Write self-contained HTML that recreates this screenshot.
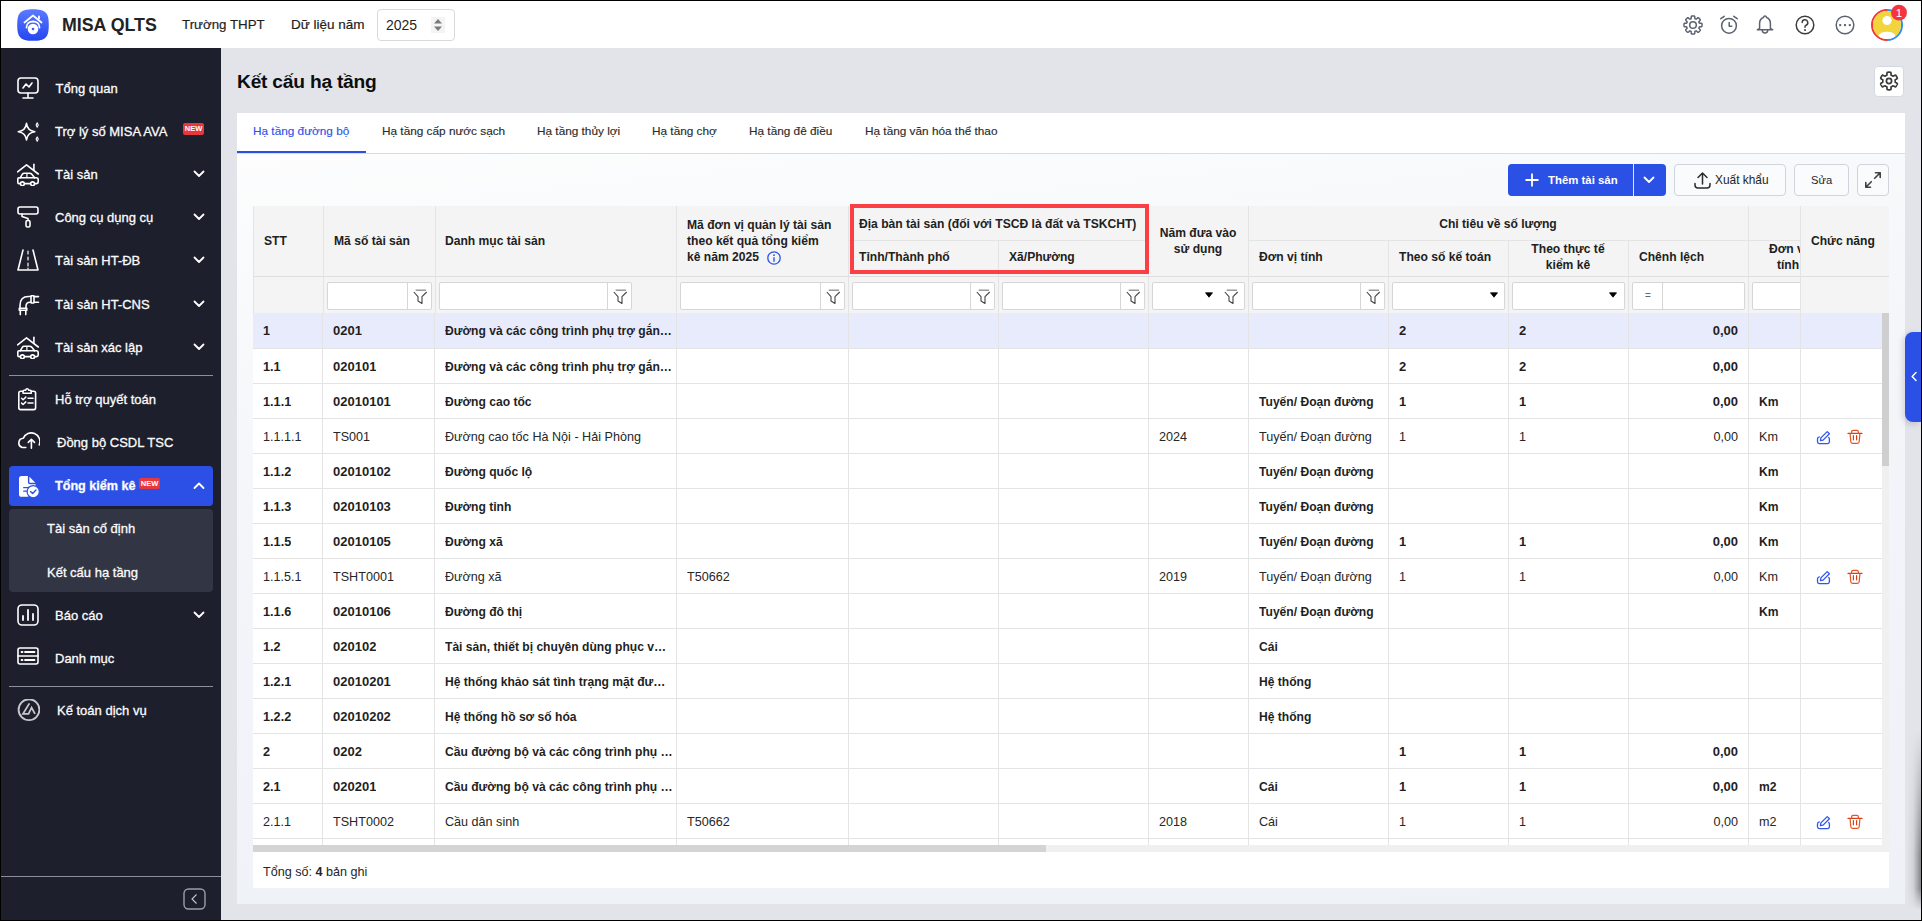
<!DOCTYPE html>
<html><head><meta charset="utf-8"><title>Kết cấu hạ tầng</title>
<style>
*{box-sizing:border-box;margin:0;padding:0}
html,body{width:1922px;height:921px;overflow:hidden;background:#000}
body{position:relative;font-family:"Liberation Sans", sans-serif;color:#212121}
.a{position:absolute}
.t{position:absolute;white-space:nowrap}
.side .t{color:#fbfbfc;font-size:13px;line-height:20px;-webkit-text-stroke:0.3px #fbfbfc}
.hd{position:absolute;font-weight:700;font-size:12.1px;color:#212121;white-space:nowrap;line-height:16px}
.c{position:absolute;white-space:nowrap;overflow:hidden;text-overflow:ellipsis;font-size:12.6px;line-height:16px;color:#262626}
.c.b{font-weight:700;font-size:12.1px;color:#1f1f1f}
.vl{position:absolute;width:1px;background:#e4e4e4}
.hl{position:absolute;height:1px;background:#e4e4e4}
.fi{position:absolute;top:282px;height:28px;background:#fff;border:1px solid #d6d6d6;border-radius:2px}
.fsep{position:absolute;top:0;bottom:0;width:1px;background:#d6d6d6}
</style></head><body>
<div class="a" style="left:1px;top:1px;width:1920px;height:919px;background:#e2e4ea"></div>

<div class="a" style="left:1px;top:1px;width:1920px;height:47px;background:#fff"></div>
<svg class="a" style="left:17px;top:9px" width="32" height="32" viewBox="0 0 32 32">
<defs><linearGradient id="lg" x1="0" y1="0" x2="0" y2="1"><stop offset="0" stop-color="#5a7bff"/><stop offset="1" stop-color="#2446f0"/></linearGradient></defs>
<path d="M16 0.2 C28.5 0.2 31.8 3.5 31.8 16 C31.8 28.5 28.5 31.8 16 31.8 C3.5 31.8 0.2 28.5 0.2 16 C0.2 3.5 3.5 0.2 16 0.2Z" fill="url(#lg)"/>
<path d="M7.5 13.5 L16 6.5 L24.5 13.5" fill="none" stroke="#fff" stroke-width="1.8" stroke-linecap="round" stroke-linejoin="round"/>
<path d="M22 9.5v-2" stroke="#fff" stroke-width="1.8" stroke-linecap="round"/>
<path d="M9.5 18.5 C9.5 14.5 12.5 12.5 16 12.5 C19.5 12.5 22.5 14.5 22.5 18.5" fill="none" stroke="#fff" stroke-width="1.8" stroke-linecap="round"/>
<circle cx="16" cy="20" r="5.3" fill="#fff"/><circle cx="16" cy="20" r="1.3" fill="#3a5cf5"/>
</svg>
<div class="t" style="left:62px;top:14px;font-size:17.8px;line-height:22px;font-weight:700;color:#222">MISA QLTS</div>
<div class="t" style="left:182px;top:15px;font-size:13.3px;line-height:20px;color:#1f1f1f;-webkit-text-stroke:0.2px #1f1f1f">Trường THPT</div>
<div class="t" style="left:291px;top:15px;font-size:13.5px;line-height:20px;color:#1f1f1f;-webkit-text-stroke:0.2px #1f1f1f">Dữ liệu năm</div>
<div class="a" style="left:377px;top:9px;width:78px;height:32px;border:1px solid #d9d9d9;border-radius:4px;background:#fff"></div>
<div class="t" style="left:386px;top:15px;font-size:14px;line-height:20px;color:#1f1f1f">2025</div>
<div class="a" style="left:431px;top:17px;width:14px;height:16px;background:#f4f4f4"></div>
<svg class="a" style="left:433px;top:18px" width="10" height="14" viewBox="0 0 10 14"><path d="M5 1 L9 5.5 H1Z M5 13 L9 8.5 H1Z" fill="#7a7a7a"/></svg>
<svg style="position:absolute;left:1683px;top:15px" width="20" height="20" viewBox="0 0 20 20" ><g fill="none" stroke="#5b6370" stroke-width="1.5" stroke-linecap="round" stroke-linejoin="round"><path d="M10.00 1.00 L10.31 1.01 L10.63 1.02 L10.94 1.05 L11.25 1.09 L11.56 1.17 L11.75 1.75 L11.82 2.71 L11.86 3.50 L12.04 3.72 L12.26 3.80 L12.47 3.88 L12.68 3.97 L12.89 4.07 L13.10 4.16 L13.54 3.87 L14.23 3.23 L14.91 2.72 L15.29 2.72 L15.54 2.91 L15.79 3.11 L16.02 3.31 L16.25 3.53 L16.47 3.75 L16.69 3.98 L16.89 4.21 L17.09 4.46 L17.28 4.71 L17.28 5.09 L16.77 5.77 L16.13 6.46 L15.84 6.90 L15.93 7.11 L16.03 7.32 L16.12 7.53 L16.20 7.74 L16.28 7.96 L16.50 8.14 L17.29 8.18 L18.25 8.25 L18.83 8.44 L18.91 8.75 L18.95 9.06 L18.98 9.37 L18.99 9.69 L19.00 10.00 L18.99 10.31 L18.98 10.63 L18.95 10.94 L18.91 11.25 L18.83 11.56 L18.25 11.75 L17.29 11.82 L16.50 11.86 L16.28 12.04 L16.20 12.26 L16.12 12.47 L16.03 12.68 L15.93 12.89 L15.84 13.10 L16.13 13.54 L16.77 14.23 L17.28 14.91 L17.28 15.29 L17.09 15.54 L16.89 15.79 L16.69 16.02 L16.47 16.25 L16.25 16.47 L16.02 16.69 L15.79 16.89 L15.54 17.09 L15.29 17.28 L14.91 17.28 L14.23 16.77 L13.54 16.13 L13.10 15.84 L12.89 15.93 L12.68 16.03 L12.47 16.12 L12.26 16.20 L12.04 16.28 L11.86 16.50 L11.82 17.29 L11.75 18.25 L11.56 18.83 L11.25 18.91 L10.94 18.95 L10.63 18.98 L10.31 18.99 L10.00 19.00 L9.69 18.99 L9.37 18.98 L9.06 18.95 L8.75 18.91 L8.44 18.83 L8.25 18.25 L8.18 17.29 L8.14 16.50 L7.96 16.28 L7.74 16.20 L7.53 16.12 L7.32 16.03 L7.11 15.93 L6.90 15.84 L6.46 16.13 L5.77 16.77 L5.09 17.28 L4.71 17.28 L4.46 17.09 L4.21 16.89 L3.98 16.69 L3.75 16.47 L3.53 16.25 L3.31 16.02 L3.11 15.79 L2.91 15.54 L2.72 15.29 L2.72 14.91 L3.23 14.23 L3.87 13.54 L4.16 13.10 L4.07 12.89 L3.97 12.68 L3.88 12.47 L3.80 12.26 L3.72 12.04 L3.50 11.86 L2.71 11.82 L1.75 11.75 L1.17 11.56 L1.09 11.25 L1.05 10.94 L1.02 10.63 L1.01 10.31 L1.00 10.00 L1.01 9.69 L1.02 9.37 L1.05 9.06 L1.09 8.75 L1.17 8.44 L1.75 8.25 L2.71 8.18 L3.50 8.14 L3.72 7.96 L3.80 7.74 L3.88 7.53 L3.97 7.32 L4.07 7.11 L4.16 6.90 L3.87 6.46 L3.23 5.77 L2.72 5.09 L2.72 4.71 L2.91 4.46 L3.11 4.21 L3.31 3.98 L3.53 3.75 L3.75 3.53 L3.98 3.31 L4.21 3.11 L4.46 2.91 L4.71 2.72 L5.09 2.72 L5.77 3.23 L6.46 3.87 L6.90 4.16 L7.11 4.07 L7.32 3.97 L7.53 3.88 L7.74 3.80 L7.96 3.72 L8.14 3.50 L8.18 2.71 L8.25 1.75 L8.44 1.17 L8.75 1.09 L9.06 1.05 L9.37 1.02 L9.69 1.01Z"/><circle cx="10" cy="10" r="3.3"/></g></svg>
<svg style="position:absolute;left:1719px;top:15px" width="20" height="20" viewBox="0 0 20 20" ><g fill="none" stroke="#5b6370" stroke-width="1.5" stroke-linecap="round" stroke-linejoin="round"><circle cx="10" cy="10.8" r="7.4"/><path d="M10.2 7.5v3.7h2.5"/><path d="M1.8 3.7l3.4-2.4M18.2 3.7l-3.4-2.4"/></g></svg>
<svg style="position:absolute;left:1755px;top:15px" width="20" height="20" viewBox="0 0 20 20" ><g fill="none" stroke="#5b6370" stroke-width="1.5" stroke-linecap="round" stroke-linejoin="round"><path d="M10 1.1c-.9 0-1.4.7-1.6 1.4C6 3.4 4.6 5.6 4.6 8.4v5l-2.3 1.4h15.4l-2.3-1.4v-5c0-2.8-1.4-5-3.8-5.9-.2-.7-.7-1.4-1.6-1.4z"/><path d="M7.3 15.2a2.7 2.7 0 0 0 5.4 0"/></g></svg>
<svg style="position:absolute;left:1795px;top:15px" width="20" height="20" viewBox="0 0 20 20" ><g fill="none" stroke="#3d3d3d" stroke-width="1.5" stroke-linecap="round"><circle cx="10" cy="10" r="8.8"/><path d="M7.2 7.6a2.8 2.8 0 1 1 3.9 2.6c-.7.3-1.1.9-1.1 1.6v.5"/></g><rect x="9.2" y="14.2" width="1.7" height="1.7" fill="#3d3d3d"/></svg>
<svg style="position:absolute;left:1835px;top:15px" width="20" height="20" viewBox="0 0 20 20" ><g fill="none" stroke="#5b6370" stroke-width="1.5"><circle cx="10" cy="10" r="8.8"/></g><g fill="#5b6370"><rect x="4.2" y="9.1" width="2" height="2"/><rect x="9" y="9.1" width="2" height="2"/><rect x="13.8" y="9.1" width="2" height="2"/></g></svg>
<svg class="a" style="left:1870px;top:4px" width="40" height="38" viewBox="0 0 40 38">
<defs><clipPath id="av"><circle cx="17" cy="21" r="14"/></clipPath></defs>
<path d="M17 36 A15 15 0 0 1 17 6" fill="none" stroke="#f2353e" stroke-width="2"/>
<path d="M17 6 A15 15 0 0 1 17 36" fill="none" stroke="#2b8ef6" stroke-width="2"/>
<circle cx="17" cy="21" r="14" fill="#f2d53c"/>
<g clip-path="url(#av)" fill="#fff"><circle cx="17" cy="16.5" r="4.6"/><ellipse cx="17" cy="32.5" rx="8.6" ry="4.8"/></g>
<circle cx="29" cy="8.7" r="7.9" fill="#f2353e"/>
<text x="29" y="12.9" font-family="Liberation Sans" font-size="11.5" fill="#fff" text-anchor="middle">1</text>
</svg>
<div class="side">
<div class="a" style="left:1px;top:48px;width:220px;height:872px;background:#1d1f2c"></div>
<svg style="position:absolute;left:17px;top:77px" width="23" height="23" viewBox="0 0 23 23" ><g fill="none" stroke="#fff" stroke-width="1.6" stroke-linecap="round" stroke-linejoin="round"><rect x="1" y="1" width="20" height="15" rx="3"/><path d="M11 16v4M6 21h10"/><path d="M6 11l3-4 3 3 3-4"/></g></svg>
<div class="t" style="left:55.5px;top:79px">Tổng quan</div>
<svg style="position:absolute;left:17px;top:120px" width="23" height="23" viewBox="0 0 23 23" ><g fill="none" stroke="#fff" stroke-width="1.6" stroke-linecap="round" stroke-linejoin="round"><path d="M9.5 3.4 Q10.4 10.8 17.8 11.7 Q10.4 12.6 9.5 20 Q8.6 12.6 1.2 11.7 Q8.6 10.8 9.5 3.4Z"/><path d="M20.2 2.8 L21.3 5 L20.2 7.2 L19.1 5Z" stroke-width="1.1"/><path d="M20.2 16.9 L21.3 19.1 L20.2 21.3 L19.1 19.1Z" stroke-width="1.1"/></g></svg>
<div class="t" style="left:55px;top:122px">Trợ lý số MISA AVA</div>
<svg style="position:absolute;left:17px;top:163px" width="23" height="23" viewBox="0 0 23 23" ><g fill="none" stroke="#fff" stroke-width="1.6" stroke-linecap="round" stroke-linejoin="round"><path d="M0.6 8.8 L9.5 1.8 L21.3 11"/><path d="M16.9 1.3 V7"/><path d="M3.2 14.8 L5.4 11.2 Q6 10.3 7.1 10.3 H12.8 Q13.9 10.3 14.6 11.1 L17.6 14.8"/><path d="M9.9 10.5 V14.5" stroke-width="1.2"/><path d="M2 14.8 H19.3 Q21.2 14.8 21.2 16.7 V19 Q21.2 20.6 19.6 20.6 H2 Q0.8 20.6 0.8 19.4 V16 Q0.8 14.8 2 14.8Z"/><circle cx="5.4" cy="20.8" r="1.9" fill="#1d1f2c"/><circle cx="15.6" cy="20.8" r="1.9" fill="#1d1f2c"/></g></svg>
<div class="t" style="left:55px;top:165px">Tài sản</div>
<svg style="position:absolute;left:193px;top:170px" width="12" height="8" viewBox="0 0 12 8" ><path d="M1.5 1.5 L6 6 L10.5 1.5" fill="none" stroke="#fff" stroke-width="1.8" stroke-linecap="round" stroke-linejoin="round"/></svg>
<svg style="position:absolute;left:17px;top:206px" width="23" height="23" viewBox="0 0 23 23" ><g fill="none" stroke="#fff" stroke-width="1.6" stroke-linecap="round" stroke-linejoin="round"><rect x="1" y="1" width="20" height="7" rx="2"/><path d="M5 8v2.5l6 2v2"/><rect x="9" y="14.5" width="4" height="6.5" rx="1.5"/></g></svg>
<div class="t" style="left:55px;top:208px">Công cụ dụng cụ</div>
<svg style="position:absolute;left:193px;top:213px" width="12" height="8" viewBox="0 0 12 8" ><path d="M1.5 1.5 L6 6 L10.5 1.5" fill="none" stroke="#fff" stroke-width="1.8" stroke-linecap="round" stroke-linejoin="round"/></svg>
<svg style="position:absolute;left:17px;top:249px" width="23" height="23" viewBox="0 0 23 23" ><g fill="none" stroke="#fff" stroke-width="1.6" stroke-linecap="round" stroke-linejoin="round"><path d="M6 1 L1 21 H21 L16 1"/><path d="M11 2v3M11 8v3M11 14v3M11 19v1" stroke-width="1.2"/></g></svg>
<div class="t" style="left:55px;top:251px">Tài sản HT-ĐB</div>
<svg style="position:absolute;left:193px;top:256px" width="12" height="8" viewBox="0 0 12 8" ><path d="M1.5 1.5 L6 6 L10.5 1.5" fill="none" stroke="#fff" stroke-width="1.8" stroke-linecap="round" stroke-linejoin="round"/></svg>
<svg style="position:absolute;left:17px;top:293px" width="23" height="23" viewBox="0 0 23 23" ><g fill="none" stroke="#fff" stroke-width="1.6" stroke-linecap="round" stroke-linejoin="round"><path d="M3 15.2 V12.5 Q3 3.5 11.5 3.5 H14"/><path d="M9 15.2 V13.5 Q9 9.3 13 9.3 H14"/><rect x="14" y="2.8" width="3" height="7.2" rx="0.5"/><path d="M21.5 3.6 H17 M17 9.3 H21.5"/><path d="M2.3 15.2 H9.8 V17.2 H2.3Z"/><path d="M3.3 17.2 V21.6 M8.8 17.2 V21.6"/></g></svg>
<div class="t" style="left:55px;top:295px">Tài sản HT-CNS</div>
<svg style="position:absolute;left:193px;top:300px" width="12" height="8" viewBox="0 0 12 8" ><path d="M1.5 1.5 L6 6 L10.5 1.5" fill="none" stroke="#fff" stroke-width="1.8" stroke-linecap="round" stroke-linejoin="round"/></svg>
<svg style="position:absolute;left:17px;top:336px" width="23" height="23" viewBox="0 0 23 23" ><g fill="none" stroke="#fff" stroke-width="1.6" stroke-linecap="round" stroke-linejoin="round"><path d="M0.6 8.8 L9.5 1.8 L21.3 11"/><path d="M16.9 1.3 V7"/><path d="M3.2 14.8 L5.4 11.2 Q6 10.3 7.1 10.3 H12.8 Q13.9 10.3 14.6 11.1 L17.6 14.8"/><path d="M9.9 10.5 V14.5" stroke-width="1.2"/><path d="M2 14.8 H19.3 Q21.2 14.8 21.2 16.7 V19 Q21.2 20.6 19.6 20.6 H2 Q0.8 20.6 0.8 19.4 V16 Q0.8 14.8 2 14.8Z"/><circle cx="5.4" cy="20.8" r="1.9" fill="#1d1f2c"/><circle cx="15.6" cy="20.8" r="1.9" fill="#1d1f2c"/></g></svg>
<div class="t" style="left:55px;top:338px">Tài sản xác lập</div>
<svg style="position:absolute;left:193px;top:343px" width="12" height="8" viewBox="0 0 12 8" ><path d="M1.5 1.5 L6 6 L10.5 1.5" fill="none" stroke="#fff" stroke-width="1.8" stroke-linecap="round" stroke-linejoin="round"/></svg>
<svg style="position:absolute;left:17px;top:388px" width="23" height="23" viewBox="0 0 23 23" ><g fill="none" stroke="#fff" stroke-width="1.6" stroke-linecap="round" stroke-linejoin="round"><path d="M6 3.3 H3.6 Q1.8 3.3 1.8 5.1 V19.8 Q1.8 21.6 3.6 21.6 H16.8 Q18.6 21.6 18.6 19.8 V5.1 Q18.6 3.3 16.8 3.3 H14.2"/><path d="M6 5.2 V3.4 Q6 2.3 7.1 2.3 H8.7 A1.5 1.5 0 0 1 11.7 2.3 H13.2 Q14.3 2.3 14.3 3.4 V5.2 Z" stroke-width="1.5"/><path d="M4.6 10.3 L6.1 11.7 L8.8 9.1 M11 10.3 H16 M4.6 15.1 L6.1 16.5 L8.8 13.9 M11 15.1 H16" stroke-width="1.5"/></g></svg>
<div class="t" style="left:55px;top:390px">Hỗ trợ quyết toán</div>
<svg style="position:absolute;left:17px;top:431px" width="23" height="23" viewBox="0 0 23 23" ><g fill="none" stroke="#fff" stroke-width="1.6" stroke-linecap="round" stroke-linejoin="round" transform="translate(0,-1.8)"><path d="M8.8 18.3 H5.2 A4.7 4.7 0 0 1 6.3 9.1 A8.6 8.6 0 1 1 22.3 15.6"/><path d="M14.4 19 V10.2 M11.3 13.2 L14.4 10.1 L17.5 13.2"/></g></svg>
<div class="t" style="left:57px;top:433px">Đồng bộ CSDL TSC</div>
<svg style="position:absolute;left:17px;top:604px" width="23" height="23" viewBox="0 0 23 23" ><g fill="none" stroke="#fff" stroke-width="1.6" stroke-linecap="round" stroke-linejoin="round"><rect x="1" y="1" width="20" height="20" rx="4"/><path d="M6 16v-4M11 16V6M16 16v-6" stroke-width="1.8"/></g></svg>
<div class="t" style="left:55px;top:606px">Báo cáo</div>
<svg style="position:absolute;left:193px;top:611px" width="12" height="8" viewBox="0 0 12 8" ><path d="M1.5 1.5 L6 6 L10.5 1.5" fill="none" stroke="#fff" stroke-width="1.8" stroke-linecap="round" stroke-linejoin="round"/></svg>
<svg style="position:absolute;left:17px;top:647px" width="23" height="23" viewBox="0 0 23 23" ><g fill="none" stroke="#fff" stroke-width="1.6" stroke-linecap="round" stroke-linejoin="round"><rect x="1" y="1" width="20" height="16" rx="2"/><path d="M1 9h20"/><path d="M4.5 5h1M8 5h9.5M4.5 13h1M8 13h9.5" stroke-width="1.8"/></g></svg>
<div class="t" style="left:55px;top:649px">Danh mục</div>
<svg style="position:absolute;left:17px;top:699px" width="23" height="23" viewBox="0 0 23 23" ><g fill="none" stroke="#c6c7cd" stroke-width="1.9"><circle cx="12" cy="10.7" r="10.4"/><path d="M12.4 4.4 L6 14.8 H11.5 L14.6 8.6 L18 14.9" stroke-width="1.8" stroke-linejoin="miter"/></g></svg>
<div class="t" style="left:57px;top:701px">Kế toán dịch vụ</div>
<div class="a" style="left:183px;top:123px;width:21px;height:12px;background:#e8383d;border-radius:2px;color:#fff;font-size:7.5px;font-weight:700;line-height:12px;text-align:center">NEW</div>
<div class="a" style="left:9px;top:375px;width:204px;height:1px;background:#8c8e99"></div>
<div class="a" style="left:9px;top:686px;width:204px;height:1px;background:#8c8e99"></div>
<div class="a" style="left:1px;top:876px;width:220px;height:1px;background:#8c8e99"></div>
<div class="a" style="left:9px;top:466px;width:204px;height:40px;background:#2c50e6;border-radius:4px"></div>
<svg style="position:absolute;left:17px;top:475px" width="23" height="23" viewBox="0 0 23 23" ><g fill="#fff"><path d="M4.6 0.9 H10.9 V7.2 Q10.9 9.3 13 9.3 H18.6 V11.5 H11.5 V21.8 H4.6 Q2 21.8 2 19.2 V3.5 Q2 0.9 4.6 0.9Z"/><path d="M12.4 1.8 L18.3 7.8 H12.4Z"/></g><path d="M6.2 12.7 H12 M6.2 16.1 H11" stroke="#2c50e6" stroke-width="1.3"/><circle cx="16.2" cy="16.7" r="6.1" fill="#fff" stroke="#2c50e6" stroke-width="1.2"/><path d="M13.5 16.6 L15.6 18.5 L19 15" stroke="#2c50e6" stroke-width="1.4" fill="none" stroke-linecap="round" stroke-linejoin="round"/></svg>
<div class="t" style="left:55px;top:476px;font-weight:700;font-size:12.6px">Tổng kiểm kê</div>
<div class="a" style="left:139px;top:478px;width:21px;height:11px;background:#e8383d;border-radius:2px;color:#fff;font-size:7.5px;font-weight:700;line-height:11px;text-align:center">NEW</div>
<svg style="position:absolute;left:193px;top:482px" width="12" height="8" viewBox="0 0 12 8" ><path d="M1.5 6 L6 1.5 L10.5 6" fill="none" stroke="#fff" stroke-width="1.8" stroke-linecap="round" stroke-linejoin="round"/></svg>
<div class="a" style="left:9px;top:509px;width:204px;height:83px;background:#323543;border-radius:4px"></div>
<div class="t" style="left:47px;top:519px">Tài sản cố định</div>
<div class="t" style="left:47px;top:563px">Kết cấu hạ tầng</div>
<svg style="position:absolute;left:183px;top:888px" width="23" height="22" viewBox="0 0 23 22" ><rect x="1" y="1" width="21" height="20" rx="4.5" fill="none" stroke="#9c9ea6" stroke-width="1.4"/><path d="M13.5 6.5 L9 11 L13.5 15.5" fill="none" stroke="#c9cad0" stroke-width="1.1"/></svg>
</div>
<div class="t" style="left:237px;top:70px;font-size:19.2px;line-height:24px;letter-spacing:-0.22px;font-weight:700;color:#0d0d0d">Kết cấu hạ tầng</div>
<div class="a" style="left:1874px;top:66px;width:30px;height:31px;background:#fff;border:1px solid #d5dae2;border-radius:4px"></div>
<svg style="position:absolute;left:1879px;top:71px" width="20" height="20" viewBox="0 0 20 20" ><g fill="none" stroke="#3b3b3b" stroke-width="1.7" stroke-linejoin="round"><path d="M10.00 1.20 L10.31 1.21 L10.61 1.22 L10.92 1.25 L11.22 1.29 L11.53 1.33 L11.82 1.42 L12.01 1.95 L12.05 2.83 L12.05 3.69 L12.12 4.16 L12.32 4.25 L12.52 4.34 L12.72 4.43 L12.91 4.53 L13.10 4.63 L13.29 4.74 L13.47 4.86 L13.64 4.98 L13.82 5.11 L13.99 5.24 L14.44 5.07 L15.18 4.64 L15.97 4.23 L16.52 4.13 L16.74 4.34 L16.93 4.58 L17.12 4.83 L17.30 5.08 L17.46 5.34 L17.62 5.60 L17.77 5.87 L17.91 6.14 L18.04 6.42 L18.16 6.70 L18.27 6.99 L18.34 7.29 L17.98 7.71 L17.23 8.20 L16.49 8.62 L16.12 8.92 L16.14 9.14 L16.17 9.35 L16.18 9.57 L16.20 9.78 L16.20 10.00 L16.20 10.22 L16.18 10.43 L16.17 10.65 L16.14 10.86 L16.12 11.08 L16.49 11.38 L17.23 11.80 L17.98 12.29 L18.34 12.71 L18.27 13.01 L18.16 13.30 L18.04 13.58 L17.91 13.86 L17.77 14.13 L17.62 14.40 L17.46 14.66 L17.30 14.92 L17.12 15.17 L16.93 15.42 L16.74 15.66 L16.52 15.87 L15.97 15.77 L15.18 15.36 L14.44 14.93 L13.99 14.76 L13.82 14.89 L13.64 15.02 L13.47 15.14 L13.29 15.26 L13.10 15.37 L12.91 15.47 L12.72 15.57 L12.52 15.66 L12.32 15.75 L12.12 15.84 L12.05 16.31 L12.05 17.17 L12.01 18.05 L11.82 18.58 L11.53 18.67 L11.22 18.71 L10.92 18.75 L10.61 18.78 L10.31 18.79 L10.00 18.80 L9.69 18.79 L9.39 18.78 L9.08 18.75 L8.78 18.71 L8.47 18.67 L8.18 18.58 L7.99 18.05 L7.95 17.17 L7.95 16.31 L7.88 15.84 L7.68 15.75 L7.48 15.66 L7.28 15.57 L7.09 15.47 L6.90 15.37 L6.71 15.26 L6.53 15.14 L6.36 15.02 L6.18 14.89 L6.01 14.76 L5.56 14.93 L4.82 15.36 L4.03 15.77 L3.48 15.87 L3.26 15.66 L3.07 15.42 L2.88 15.17 L2.70 14.92 L2.54 14.66 L2.38 14.40 L2.23 14.13 L2.09 13.86 L1.96 13.58 L1.84 13.30 L1.73 13.01 L1.66 12.71 L2.02 12.29 L2.77 11.80 L3.51 11.38 L3.88 11.08 L3.86 10.86 L3.83 10.65 L3.82 10.43 L3.80 10.22 L3.80 10.00 L3.80 9.78 L3.82 9.57 L3.83 9.35 L3.86 9.14 L3.88 8.92 L3.51 8.62 L2.77 8.20 L2.02 7.71 L1.66 7.29 L1.73 6.99 L1.84 6.70 L1.96 6.42 L2.09 6.14 L2.23 5.87 L2.38 5.60 L2.54 5.34 L2.70 5.08 L2.88 4.83 L3.07 4.58 L3.26 4.34 L3.48 4.13 L4.03 4.23 L4.82 4.64 L5.56 5.07 L6.01 5.24 L6.18 5.11 L6.36 4.98 L6.53 4.86 L6.71 4.74 L6.90 4.63 L7.09 4.53 L7.28 4.43 L7.48 4.34 L7.68 4.25 L7.88 4.16 L7.95 3.69 L7.95 2.83 L7.99 1.95 L8.18 1.42 L8.47 1.33 L8.78 1.29 L9.08 1.25 L9.39 1.22 L9.69 1.21Z"/><circle cx="10" cy="10" r="2.6"/></g></svg>
<div class="a" style="left:237px;top:113px;width:1668px;height:791px;background:linear-gradient(174deg,#fefefe 0%,#f7f9fb 22%,#f1f4f8 60%,#eef2f7 100%)"></div>
<div class="a" style="left:237px;top:113px;width:1668px;height:40px;background:#fff"></div>
<div class="a" style="left:237px;top:153px;width:1668px;height:1px;background:#d9dce3"></div>
<div class="t" style="left:253px;top:123px;font-size:11.8px;line-height:16px;color:#2d52e8;-webkit-text-stroke:0.15px #2d52e8">Hạ tầng đường bộ</div>
<div class="t" style="left:382px;top:123px;font-size:11.8px;line-height:16px;color:#2b2b2b;-webkit-text-stroke:0.15px #2b2b2b">Hạ tầng cấp nước sạch</div>
<div class="t" style="left:537px;top:123px;font-size:11.8px;line-height:16px;color:#2b2b2b;-webkit-text-stroke:0.15px #2b2b2b">Hạ tầng thủy lợi</div>
<div class="t" style="left:652px;top:123px;font-size:11.8px;line-height:16px;color:#2b2b2b;-webkit-text-stroke:0.15px #2b2b2b">Hạ tầng chợ</div>
<div class="t" style="left:749px;top:123px;font-size:11.8px;line-height:16px;color:#2b2b2b;-webkit-text-stroke:0.15px #2b2b2b">Hạ tầng đê điều</div>
<div class="t" style="left:865px;top:123px;font-size:11.8px;line-height:16px;color:#2b2b2b;-webkit-text-stroke:0.15px #2b2b2b">Hạ tầng văn hóa thể thao</div>
<div class="a" style="left:237px;top:151px;width:129px;height:2px;background:#2a4fe6"></div>
<div class="a" style="left:1508px;top:164px;width:158px;height:32px;background:#2b50e6;border-radius:4px"></div>
<div class="a" style="left:1633px;top:164px;width:1px;height:32px;background:#dfe5ff"></div>
<svg style="position:absolute;left:1525px;top:173px" width="14" height="14" viewBox="0 0 14 14" ><path d="M7 0.5v13M0.5 7h13" stroke="#fff" stroke-width="1.8"/></svg>
<div class="t" style="left:1548px;top:172px;font-size:11.4px;line-height:16px;font-weight:700;color:#fff">Thêm tài sản</div>
<svg style="position:absolute;left:1643px;top:176px" width="12" height="8" viewBox="0 0 12 8" ><path d="M1.5 1.5 L6 6 L10.5 1.5" fill="none" stroke="#fff" stroke-width="1.8" stroke-linecap="round" stroke-linejoin="round"/></svg>
<div class="a" style="left:1674px;top:164px;width:112px;height:32px;background:rgba(255,255,255,0.35);border:1px solid #d0d5dd;border-radius:4px"></div>
<div class="a" style="left:1794px;top:164px;width:55px;height:32px;background:rgba(255,255,255,0.35);border:1px solid #d0d5dd;border-radius:4px"></div>
<div class="a" style="left:1857px;top:164px;width:32px;height:32px;background:rgba(255,255,255,0.35);border:1px solid #d0d5dd;border-radius:4px"></div>
<svg style="position:absolute;left:1694px;top:171px" width="17" height="18" viewBox="0 0 17 18" ><g fill="none" stroke="#2b2b2b" stroke-width="1.5" stroke-linecap="round" stroke-linejoin="round"><path d="M8.5 13V2M4 6.5l4.5-4.5 4.5 4.5"/><path d="M1 12.5v1.5a3 3 0 0 0 3 3h9a3 3 0 0 0 3-3v-1.5"/></g></svg>
<div class="t" style="left:1715px;top:172px;font-size:11.9px;line-height:16px;color:#1f1f1f">Xuất khẩu</div>
<div class="t" style="left:1811px;top:172px;font-size:11.2px;line-height:16px;color:#1f1f1f">Sửa</div>
<svg style="position:absolute;left:1864px;top:171px" width="18" height="18" viewBox="0 0 18 18" ><g fill="none" stroke="#404040" stroke-width="1.6" stroke-linecap="round" stroke-linejoin="round"><path d="M11.5 1.8h4.7v4.7M16.2 1.8l-5.5 5.5M6.5 16.2h-4.7v-4.7M1.8 16.2l5.5-5.5"/></g></svg>
<div class="a" style="left:253px;top:206px;width:1636px;height:107px;background:#f4f4f4"></div>
<div class="a" style="left:253px;top:313px;width:1629px;height:532px;background:#fff"></div>
<div class="hl" style="left:253px;top:276px;width:1636px;background:#dedede"></div>
<div class="hl" style="left:848px;top:240px;width:300px"></div>
<div class="hl" style="left:1248px;top:240px;width:552px"></div>
<div class="vl" style="left:253px;top:206px;height:107px"></div>
<div class="vl" style="left:323px;top:206px;height:107px"></div>
<div class="vl" style="left:435px;top:206px;height:107px"></div>
<div class="vl" style="left:676px;top:206px;height:107px"></div>
<div class="vl" style="left:848px;top:206px;height:107px"></div>
<div class="vl" style="left:1148px;top:206px;height:107px"></div>
<div class="vl" style="left:1248px;top:206px;height:107px"></div>
<div class="vl" style="left:1748px;top:206px;height:107px"></div>
<div class="vl" style="left:1800px;top:206px;height:107px"></div>
<div class="vl" style="left:998px;top:240px;height:73px"></div>
<div class="vl" style="left:1388px;top:240px;height:73px"></div>
<div class="vl" style="left:1508px;top:240px;height:73px"></div>
<div class="vl" style="left:1628px;top:240px;height:73px"></div>
<div class="hd" style="left:264px;top:233px;">STT</div>
<div class="hd" style="left:334px;top:233px;">Mã số tài sản</div>
<div class="hd" style="left:445px;top:233px;">Danh mục tài sản</div>
<div class="hd" style="left:687px;top:217px;">Mã đơn vị quản lý tài sản</div>
<div class="hd" style="left:687px;top:233px;">theo kết quả tổng kiểm</div>
<div class="hd" style="left:687px;top:249px;">kê năm 2025</div>
<svg style="position:absolute;left:767px;top:251px" width="14" height="14" viewBox="0 0 14 14" ><circle cx="7" cy="7" r="6.2" fill="none" stroke="#2d52e8" stroke-width="1.3"/><circle cx="7" cy="4.2" r="0.9" fill="#2d52e8"/><path d="M7 6.2v4.5" stroke="#2d52e8" stroke-width="1.4"/></svg>
<div class="hd" style="left:859px;top:216px;">Địa bàn tài sản (đối với TSCĐ là đất và TSKCHT)</div>
<div class="hd" style="left:859px;top:249px;">Tỉnh/Thành phố</div>
<div class="hd" style="left:1009px;top:249px;">Xã/Phường</div>
<div class="hd" style="left:1148px;top:225px;width:100px;text-align:center">Năm đưa vào<br>sử dụng</div>
<div class="hd" style="left:1248px;top:216px;width:500px;text-align:center">Chỉ tiêu về số lượng</div>
<div class="hd" style="left:1259px;top:249px;">Đơn vị tính</div>
<div class="hd" style="left:1399px;top:249px;">Theo số kế toán</div>
<div class="hd" style="left:1508px;top:241px;width:120px;text-align:center">Theo thực tế<br>kiểm kê</div>
<div class="hd" style="left:1639px;top:249px;">Chênh lệch</div>
<div class="a" style="left:1749px;top:241px;width:51px;height:35px;overflow:hidden"><div class="hd" style="left:-1px;top:0px;width:80px;text-align:center">Đơn vị<br>tính</div></div>
<div class="hd" style="left:1811px;top:233px;">Chức năng</div>
<div class="a" style="left:850px;top:204px;width:299px;height:70px;border:4px solid #fb3f44"></div>
<div class="fi" style="left:327px;width:105px">
<div class="fsep" style="left:79px"></div>
</div>
<svg style="position:absolute;left:413px;top:289px" width="15" height="16" viewBox="0 0 15 16" ><path d="M2.7 1.2h10.3" stroke="#8a8a8a" stroke-width="1.3"/><path d="M0.8 3 L5 7.6 V12 L9 14.5 V7.6 L13.7 3" fill="none" stroke="#444" stroke-width="1.1" stroke-linejoin="round"/></svg>
<div class="fi" style="left:439px;width:193px">
<div class="fsep" style="left:167px"></div>
</div>
<svg style="position:absolute;left:613px;top:289px" width="15" height="16" viewBox="0 0 15 16" ><path d="M2.7 1.2h10.3" stroke="#8a8a8a" stroke-width="1.3"/><path d="M0.8 3 L5 7.6 V12 L9 14.5 V7.6 L13.7 3" fill="none" stroke="#444" stroke-width="1.1" stroke-linejoin="round"/></svg>
<div class="fi" style="left:680px;width:165px">
<div class="fsep" style="left:139px"></div>
</div>
<svg style="position:absolute;left:826px;top:289px" width="15" height="16" viewBox="0 0 15 16" ><path d="M2.7 1.2h10.3" stroke="#8a8a8a" stroke-width="1.3"/><path d="M0.8 3 L5 7.6 V12 L9 14.5 V7.6 L13.7 3" fill="none" stroke="#444" stroke-width="1.1" stroke-linejoin="round"/></svg>
<div class="fi" style="left:852px;width:143px">
<div class="fsep" style="left:117px"></div>
</div>
<svg style="position:absolute;left:976px;top:289px" width="15" height="16" viewBox="0 0 15 16" ><path d="M2.7 1.2h10.3" stroke="#8a8a8a" stroke-width="1.3"/><path d="M0.8 3 L5 7.6 V12 L9 14.5 V7.6 L13.7 3" fill="none" stroke="#444" stroke-width="1.1" stroke-linejoin="round"/></svg>
<div class="fi" style="left:1002px;width:143px">
<div class="fsep" style="left:117px"></div>
</div>
<svg style="position:absolute;left:1126px;top:289px" width="15" height="16" viewBox="0 0 15 16" ><path d="M2.7 1.2h10.3" stroke="#8a8a8a" stroke-width="1.3"/><path d="M0.8 3 L5 7.6 V12 L9 14.5 V7.6 L13.7 3" fill="none" stroke="#444" stroke-width="1.1" stroke-linejoin="round"/></svg>
<div class="fi" style="left:1152px;width:93px">
</div>
<svg style="position:absolute;left:1224px;top:289px" width="15" height="16" viewBox="0 0 15 16" ><path d="M2.7 1.2h10.3" stroke="#8a8a8a" stroke-width="1.3"/><path d="M0.8 3 L5 7.6 V12 L9 14.5 V7.6 L13.7 3" fill="none" stroke="#444" stroke-width="1.1" stroke-linejoin="round"/></svg>
<svg style="position:absolute;left:1205px;top:292px" width="8" height="6" viewBox="0 0 8 6" ><path d="M0.5 0.8 H7.5 L4 5.2Z" fill="#000" stroke="#000" stroke-width="0.8" stroke-linejoin="round"/></svg>
<div class="fi" style="left:1252px;width:133px">
<div class="fsep" style="left:107px"></div>
</div>
<svg style="position:absolute;left:1366px;top:289px" width="15" height="16" viewBox="0 0 15 16" ><path d="M2.7 1.2h10.3" stroke="#8a8a8a" stroke-width="1.3"/><path d="M0.8 3 L5 7.6 V12 L9 14.5 V7.6 L13.7 3" fill="none" stroke="#444" stroke-width="1.1" stroke-linejoin="round"/></svg>
<div class="fi" style="left:1392px;width:113px">
</div>
<svg style="position:absolute;left:1490px;top:292px" width="8" height="6" viewBox="0 0 8 6" ><path d="M0.5 0.8 H7.5 L4 5.2Z" fill="#000" stroke="#000" stroke-width="0.8" stroke-linejoin="round"/></svg>
<div class="fi" style="left:1512px;width:113px">
</div>
<svg style="position:absolute;left:1609px;top:292px" width="8" height="6" viewBox="0 0 8 6" ><path d="M0.5 0.8 H7.5 L4 5.2Z" fill="#000" stroke="#000" stroke-width="0.8" stroke-linejoin="round"/></svg>
<div class="fi" style="left:1632px;width:113px">
</div>
<div class="fsep" style="left:1662px;top:282px;height:28px;position:absolute"></div>
<div class="t" style="left:1645px;top:289px;font-size:10px;line-height:14px;color:#666">=</div>
<div class="fi" style="left:1752px;width:60px"></div>
<div class="a" style="left:1801px;top:277px;width:81px;height:36px;background:#f4f4f4"></div>
<div class="vl" style="left:1800px;top:206px;height:107px"></div>
<div class="a" style="left:253px;top:313px;width:1629px;height:35px;background:#e8ebfb"></div>
<div class="hl" style="left:253px;top:348px;width:1629px"></div>
<div class="c b" style="left:263px;top:323px;font-size:12.7px;">1</div>
<div class="c b" style="left:333px;top:323px;font-size:13px;">0201</div>
<div class="c b" style="left:445px;top:323px;width:228px">Đường và các công trình phụ trợ gắn liền với đường bộ</div>
<div class="c b" style="left:1399px;top:323px;font-size:13px;">2</div>
<div class="c b" style="left:1519px;top:323px;font-size:13px;">2</div>
<div class="c b" style="left:1628px;top:323px;width:110px;text-align:right;font-size:13px;">0,00</div>
<div class="hl" style="left:253px;top:383px;width:1629px"></div>
<div class="c b" style="left:263px;top:359px;font-size:12.7px;">1.1</div>
<div class="c b" style="left:333px;top:359px;font-size:13px;">020101</div>
<div class="c b" style="left:445px;top:359px;width:228px">Đường và các công trình phụ trợ gắn liền</div>
<div class="c b" style="left:1399px;top:359px;font-size:13px;">2</div>
<div class="c b" style="left:1519px;top:359px;font-size:13px;">2</div>
<div class="c b" style="left:1628px;top:359px;width:110px;text-align:right;font-size:13px;">0,00</div>
<div class="hl" style="left:253px;top:418px;width:1629px"></div>
<div class="c b" style="left:263px;top:394px;font-size:12.7px;">1.1.1</div>
<div class="c b" style="left:333px;top:394px;font-size:13px;">02010101</div>
<div class="c b" style="left:445px;top:394px;width:228px">Đường cao tốc</div>
<div class="c b" style="left:1259px;top:394px;">Tuyến/ Đoạn đường</div>
<div class="c b" style="left:1399px;top:394px;font-size:13px;">1</div>
<div class="c b" style="left:1519px;top:394px;font-size:13px;">1</div>
<div class="c b" style="left:1628px;top:394px;width:110px;text-align:right;font-size:13px;">0,00</div>
<div class="c b" style="left:1759px;top:394px;width:40px">Km</div>
<div class="hl" style="left:253px;top:453px;width:1629px"></div>
<div class="c" style="left:263px;top:429px;">1.1.1.1</div>
<div class="c" style="left:333px;top:429px;">TS001</div>
<div class="c" style="left:445px;top:429px;width:228px">Đường cao tốc Hà Nội - Hải Phòng</div>
<div class="c" style="left:1159px;top:429px;">2024</div>
<div class="c" style="left:1259px;top:429px;">Tuyến/ Đoạn đường</div>
<div class="c" style="left:1399px;top:429px;">1</div>
<div class="c" style="left:1519px;top:429px;">1</div>
<div class="c" style="left:1628px;top:429px;width:110px;text-align:right;">0,00</div>
<div class="c" style="left:1759px;top:429px;width:40px">Km</div>
<svg style="position:absolute;left:1816px;top:430px" width="15" height="15" viewBox="0 0 15 15" ><g fill="none" stroke="#2f56ee" stroke-width="1.3" stroke-linecap="round" stroke-linejoin="round"><path d="M4.4 10.6 L4.9 7.9 L11.2 1.6 L13.4 3.8 L7.1 10.1 Z"/><path d="M3.3 6.9 Q1.5 7.3 1.5 9.1 V11.8 Q1.5 13.6 3.3 13.6 H11.6 Q13.4 13.6 13.4 11.8 V9.3 Q13.4 8.1 12.7 7.5"/></g></svg>
<svg style="position:absolute;left:1847px;top:429px" width="16" height="16" viewBox="0 0 16 16" ><g fill="none" stroke="#e2542a" stroke-width="1.2" stroke-linecap="round"><path d="M1.1 4.4 H14.9" stroke="#d9400f" stroke-width="1.4"/><path d="M4.6 4.2 V3 Q4.6 1.3 6.3 1.3 H9.7 Q11.4 1.3 11.4 3 V4.2"/><path d="M3.1 4.6 L3.8 12.8 Q4 14.4 5.6 14.4 H10.4 Q12 14.4 12.2 12.8 L12.9 4.6"/><path d="M6.4 6.6 V10.8 M9.6 6.6 V10.8" stroke="#d9400f"/></g></svg>
<div class="hl" style="left:253px;top:488px;width:1629px"></div>
<div class="c b" style="left:263px;top:464px;font-size:12.7px;">1.1.2</div>
<div class="c b" style="left:333px;top:464px;font-size:13px;">02010102</div>
<div class="c b" style="left:445px;top:464px;width:228px">Đường quốc lộ</div>
<div class="c b" style="left:1259px;top:464px;">Tuyến/ Đoạn đường</div>
<div class="c b" style="left:1759px;top:464px;width:40px">Km</div>
<div class="hl" style="left:253px;top:523px;width:1629px"></div>
<div class="c b" style="left:263px;top:499px;font-size:12.7px;">1.1.3</div>
<div class="c b" style="left:333px;top:499px;font-size:13px;">02010103</div>
<div class="c b" style="left:445px;top:499px;width:228px">Đường tỉnh</div>
<div class="c b" style="left:1259px;top:499px;">Tuyến/ Đoạn đường</div>
<div class="c b" style="left:1759px;top:499px;width:40px">Km</div>
<div class="hl" style="left:253px;top:558px;width:1629px"></div>
<div class="c b" style="left:263px;top:534px;font-size:12.7px;">1.1.5</div>
<div class="c b" style="left:333px;top:534px;font-size:13px;">02010105</div>
<div class="c b" style="left:445px;top:534px;width:228px">Đường xã</div>
<div class="c b" style="left:1259px;top:534px;">Tuyến/ Đoạn đường</div>
<div class="c b" style="left:1399px;top:534px;font-size:13px;">1</div>
<div class="c b" style="left:1519px;top:534px;font-size:13px;">1</div>
<div class="c b" style="left:1628px;top:534px;width:110px;text-align:right;font-size:13px;">0,00</div>
<div class="c b" style="left:1759px;top:534px;width:40px">Km</div>
<div class="hl" style="left:253px;top:593px;width:1629px"></div>
<div class="c" style="left:263px;top:569px;">1.1.5.1</div>
<div class="c" style="left:333px;top:569px;">TSHT0001</div>
<div class="c" style="left:445px;top:569px;width:228px">Đường xã</div>
<div class="c" style="left:687px;top:569px;">T50662</div>
<div class="c" style="left:1159px;top:569px;">2019</div>
<div class="c" style="left:1259px;top:569px;">Tuyến/ Đoạn đường</div>
<div class="c" style="left:1399px;top:569px;">1</div>
<div class="c" style="left:1519px;top:569px;">1</div>
<div class="c" style="left:1628px;top:569px;width:110px;text-align:right;">0,00</div>
<div class="c" style="left:1759px;top:569px;width:40px">Km</div>
<svg style="position:absolute;left:1816px;top:570px" width="15" height="15" viewBox="0 0 15 15" ><g fill="none" stroke="#2f56ee" stroke-width="1.3" stroke-linecap="round" stroke-linejoin="round"><path d="M4.4 10.6 L4.9 7.9 L11.2 1.6 L13.4 3.8 L7.1 10.1 Z"/><path d="M3.3 6.9 Q1.5 7.3 1.5 9.1 V11.8 Q1.5 13.6 3.3 13.6 H11.6 Q13.4 13.6 13.4 11.8 V9.3 Q13.4 8.1 12.7 7.5"/></g></svg>
<svg style="position:absolute;left:1847px;top:569px" width="16" height="16" viewBox="0 0 16 16" ><g fill="none" stroke="#e2542a" stroke-width="1.2" stroke-linecap="round"><path d="M1.1 4.4 H14.9" stroke="#d9400f" stroke-width="1.4"/><path d="M4.6 4.2 V3 Q4.6 1.3 6.3 1.3 H9.7 Q11.4 1.3 11.4 3 V4.2"/><path d="M3.1 4.6 L3.8 12.8 Q4 14.4 5.6 14.4 H10.4 Q12 14.4 12.2 12.8 L12.9 4.6"/><path d="M6.4 6.6 V10.8 M9.6 6.6 V10.8" stroke="#d9400f"/></g></svg>
<div class="hl" style="left:253px;top:628px;width:1629px"></div>
<div class="c b" style="left:263px;top:604px;font-size:12.7px;">1.1.6</div>
<div class="c b" style="left:333px;top:604px;font-size:13px;">02010106</div>
<div class="c b" style="left:445px;top:604px;width:228px">Đường đô thị</div>
<div class="c b" style="left:1259px;top:604px;">Tuyến/ Đoạn đường</div>
<div class="c b" style="left:1759px;top:604px;width:40px">Km</div>
<div class="hl" style="left:253px;top:663px;width:1629px"></div>
<div class="c b" style="left:263px;top:639px;font-size:12.7px;">1.2</div>
<div class="c b" style="left:333px;top:639px;font-size:13px;">020102</div>
<div class="c b" style="left:445px;top:639px;width:228px">Tài sản, thiết bị chuyên dùng phục vụ quản lý</div>
<div class="c b" style="left:1259px;top:639px;">Cái</div>
<div class="hl" style="left:253px;top:698px;width:1629px"></div>
<div class="c b" style="left:263px;top:674px;font-size:12.7px;">1.2.1</div>
<div class="c b" style="left:333px;top:674px;font-size:13px;">02010201</div>
<div class="c b" style="left:445px;top:674px;width:228px">Hệ thống khảo sát tình trạng mặt đường</div>
<div class="c b" style="left:1259px;top:674px;">Hệ thống</div>
<div class="hl" style="left:253px;top:733px;width:1629px"></div>
<div class="c b" style="left:263px;top:709px;font-size:12.7px;">1.2.2</div>
<div class="c b" style="left:333px;top:709px;font-size:13px;">02010202</div>
<div class="c b" style="left:445px;top:709px;width:228px">Hệ thống hồ sơ số hóa</div>
<div class="c b" style="left:1259px;top:709px;">Hệ thống</div>
<div class="hl" style="left:253px;top:768px;width:1629px"></div>
<div class="c b" style="left:263px;top:744px;font-size:12.7px;">2</div>
<div class="c b" style="left:333px;top:744px;font-size:13px;">0202</div>
<div class="c b" style="left:445px;top:744px;width:228px">Cầu đường bộ và các công trình phụ trợ</div>
<div class="c b" style="left:1399px;top:744px;font-size:13px;">1</div>
<div class="c b" style="left:1519px;top:744px;font-size:13px;">1</div>
<div class="c b" style="left:1628px;top:744px;width:110px;text-align:right;font-size:13px;">0,00</div>
<div class="hl" style="left:253px;top:803px;width:1629px"></div>
<div class="c b" style="left:263px;top:779px;font-size:12.7px;">2.1</div>
<div class="c b" style="left:333px;top:779px;font-size:13px;">020201</div>
<div class="c b" style="left:445px;top:779px;width:228px">Cầu đường bộ và các công trình phụ trợ</div>
<div class="c b" style="left:1259px;top:779px;">Cái</div>
<div class="c b" style="left:1399px;top:779px;font-size:13px;">1</div>
<div class="c b" style="left:1519px;top:779px;font-size:13px;">1</div>
<div class="c b" style="left:1628px;top:779px;width:110px;text-align:right;font-size:13px;">0,00</div>
<div class="c b" style="left:1759px;top:779px;width:40px">m2</div>
<div class="hl" style="left:253px;top:838px;width:1629px"></div>
<div class="c" style="left:263px;top:814px;">2.1.1</div>
<div class="c" style="left:333px;top:814px;">TSHT0002</div>
<div class="c" style="left:445px;top:814px;width:228px">Cầu dân sinh</div>
<div class="c" style="left:687px;top:814px;">T50662</div>
<div class="c" style="left:1159px;top:814px;">2018</div>
<div class="c" style="left:1259px;top:814px;">Cái</div>
<div class="c" style="left:1399px;top:814px;">1</div>
<div class="c" style="left:1519px;top:814px;">1</div>
<div class="c" style="left:1628px;top:814px;width:110px;text-align:right;">0,00</div>
<div class="c" style="left:1759px;top:814px;width:40px">m2</div>
<svg style="position:absolute;left:1816px;top:815px" width="15" height="15" viewBox="0 0 15 15" ><g fill="none" stroke="#2f56ee" stroke-width="1.3" stroke-linecap="round" stroke-linejoin="round"><path d="M4.4 10.6 L4.9 7.9 L11.2 1.6 L13.4 3.8 L7.1 10.1 Z"/><path d="M3.3 6.9 Q1.5 7.3 1.5 9.1 V11.8 Q1.5 13.6 3.3 13.6 H11.6 Q13.4 13.6 13.4 11.8 V9.3 Q13.4 8.1 12.7 7.5"/></g></svg>
<svg style="position:absolute;left:1847px;top:814px" width="16" height="16" viewBox="0 0 16 16" ><g fill="none" stroke="#e2542a" stroke-width="1.2" stroke-linecap="round"><path d="M1.1 4.4 H14.9" stroke="#d9400f" stroke-width="1.4"/><path d="M4.6 4.2 V3 Q4.6 1.3 6.3 1.3 H9.7 Q11.4 1.3 11.4 3 V4.2"/><path d="M3.1 4.6 L3.8 12.8 Q4 14.4 5.6 14.4 H10.4 Q12 14.4 12.2 12.8 L12.9 4.6"/><path d="M6.4 6.6 V10.8 M9.6 6.6 V10.8" stroke="#d9400f"/></g></svg>
<div class="vl" style="left:322px;top:313px;height:532px"></div>
<div class="vl" style="left:434px;top:313px;height:532px"></div>
<div class="vl" style="left:676px;top:313px;height:532px"></div>
<div class="vl" style="left:848px;top:313px;height:532px"></div>
<div class="vl" style="left:998px;top:313px;height:532px"></div>
<div class="vl" style="left:1148px;top:313px;height:532px"></div>
<div class="vl" style="left:1248px;top:313px;height:532px"></div>
<div class="vl" style="left:1388px;top:313px;height:532px"></div>
<div class="vl" style="left:1508px;top:313px;height:532px"></div>
<div class="vl" style="left:1628px;top:313px;height:532px"></div>
<div class="vl" style="left:1748px;top:313px;height:532px"></div>
<div class="vl" style="left:1800px;top:313px;height:532px"></div>
<div class="a" style="left:1882px;top:313px;width:7px;height:532px;background:#f0f0f0"></div>
<div class="a" style="left:1882px;top:313px;width:7px;height:153px;background:#cfcfcf"></div>
<div class="a" style="left:253px;top:845px;width:1636px;height:7px;background:#f0f0f0"></div>
<div class="a" style="left:253px;top:845px;width:793px;height:7px;background:#d4d4d4"></div>
<div class="a" style="left:253px;top:852px;width:1636px;height:36px;background:#fff"></div>
<div class="t" style="left:263px;top:864px;font-size:12.6px;line-height:16px;color:#262626">Tổng số: <b>4</b> bản ghi</div>
<div class="a" style="left:1905px;top:332px;width:16px;height:90px;background:#2b50e6;border-radius:8px 0 0 8px;box-shadow:-2px 2px 6px rgba(0,0,0,0.15)"></div>
<svg style="position:absolute;left:1910px;top:371px" width="8" height="11" viewBox="0 0 8 11" ><path d="M6 1.5 L2.2 5.5 L6 9.5" fill="none" stroke="#fff" stroke-width="1.5" stroke-linecap="round" stroke-linejoin="round"/></svg>
<div class="a" style="left:1907px;top:730px;width:14px;height:180px;background:linear-gradient(90deg,rgba(0,0,0,0) 0%,rgba(0,0,0,0.08) 45%,rgba(0,0,0,0.42) 100%);-webkit-mask-image:linear-gradient(180deg,transparent 0%,#000 70%,#000 88%,transparent 100%)"></div>
</body></html>
